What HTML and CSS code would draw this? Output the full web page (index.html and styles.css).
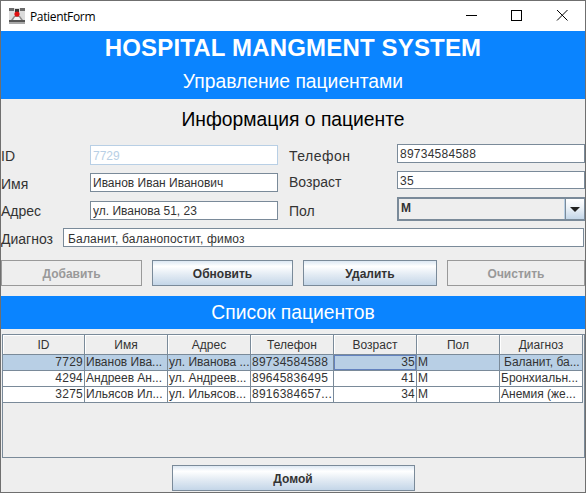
FILE: index.html
```html
<!DOCTYPE html>
<html lang="en">
<head>
    <meta charset="UTF-8">
    <title>PatientForm</title>
    <link rel="stylesheet" href="styles.css">
</head>
<body>
    <div class="window">
        <div class="titlebar">
            <svg class="app-icon" width="16" height="16" viewBox="0 0 16 16">
                <rect width="16" height="16" fill="#dcdcdc"/>
                <path d="M0 0 H5 V3 H0 Z M11 0 H16 V3 H11 Z" fill="#6a6a6a"/>
                <rect x="6" y="1" width="4" height="3" fill="#333"/>
                <path d="M2 12 L5 8 H11 L14 12 Z" fill="#8c8c8c"/>
                <path d="M4 12 L6 9 H10 L12 12 Z" fill="#f2f2f2"/>
                <circle cx="8" cy="6" r="2.6" fill="#e01010"/>
                <rect y="12" width="16" height="2" fill="#555"/>
                <rect y="14" width="16" height="2" fill="#a8a8a8"/>
            </svg>
            <span class="window-title">PatientForm</span>
            <div class="window-buttons">
                <svg width="102" height="30" viewBox="0 0 102 30">
                    <path d="M0 14.5 H11" stroke="#000" fill="none"/>
                    <rect x="45.5" y="9.5" width="10" height="10" stroke="#000" fill="none"/>
                    <path d="M91 9 L101.5 19.5 M101.5 9 L91 19.5" stroke="#000" fill="none"/>
                </svg>
            </div>
        </div>

        <div class="banner">
            <h1>HOSPITAL MANGMENT SYSTEM</h1>
            <h2>Управление пациентами</h2>
        </div>

        <h3 class="section-title">Информация о пациенте</h3>

        <div class="form-columns">
            <div class="form-left">
                <div class="form-row first">
                    <label>ID</label>
                    <input class="field disabled" type="text" value="7729" disabled>
                </div>
                <div class="form-row">
                    <label>Имя</label>
                    <input class="field" type="text" value="Иванов Иван Иванович">
                </div>
                <div class="form-row last">
                    <label>Адрес</label>
                    <input class="field" type="text" value="ул. Иванова 51, 23">
                </div>
            </div>
            <div class="form-right">
                <div class="form-row">
                    <label class="wide">Телефон</label>
                    <input class="field digits" type="text" value="89734584588">
                </div>
                <div class="form-row short">
                    <label>Возраст</label>
                    <input class="field digits" type="text" value="35">
                </div>
                <div class="form-row combo-row">
                    <label>Пол</label>
                    <div class="combo">
                        <span class="combo-value">М</span>
                        <span class="combo-arrow"><span class="arrow"></span></span>
                    </div>
                </div>
            </div>
        </div>

        <div class="diagnosis-row">
            <label>Диагноз</label>
            <input class="field" type="text" value="Баланит, баланопостит, фимоз">
        </div>

        <div class="actions">
            <button class="btn add" disabled>Добавить</button>
            <button class="btn update">Обновить</button>
            <button class="btn remove">Удалить</button>
            <button class="btn clear" disabled>Очистить</button>
        </div>

        <div class="banner list-banner">
            <h2>Список пациентов</h2>
        </div>

        <div class="table-pane">
            <table>
                <thead>
                    <tr>
                        <th>ID</th><th>Имя</th><th>Адрес</th><th>Телефон</th><th>Возраст</th><th>Пол</th><th>Диагноз</th>
                    </tr>
                </thead>
                <tbody>
                    <tr class="selected">
                        <td class="num digits">7729</td><td>Иванов Ива...</td><td>ул. Иванова ...</td><td class="digits">89734584588</td><td class="num digits focused">35</td><td>М</td><td class="indented">Баланит, ба...</td>
                    </tr>
                    <tr>
                        <td class="num digits">4294</td><td>Андреев Ан...</td><td>ул. Андреев...</td><td class="digits">89645836495</td><td class="num digits">41</td><td>М</td><td>Бронхиальн...</td>
                    </tr>
                    <tr>
                        <td class="num digits">3275</td><td>Ильясов Ил...</td><td>ул. Ильясов...</td><td class="digits">8916384657...</td><td class="num digits">34</td><td>М</td><td>Анемия (же...</td>
                    </tr>
                </tbody>
            </table>
        </div>

        <div class="home-row">
            <button class="btn home">Домой</button>
        </div>
    </div>
</body>
</html>
```

FILE: styles.css
```css
* {
    box-sizing: border-box;
}
body {
    margin: 0;
    font-family: "Liberation Sans", Arial, sans-serif;
    background: #eeeeee;
}
.window {
    width: 586px;
    height: 493px;
    border: 1px solid #6f6f6f;
    background: #eeeeee;
    display: flex;
    flex-direction: column;
    overflow: hidden;
}
.titlebar {
    height: 30px;
    flex: none;
    background: #fff;
    display: flex;
    align-items: center;
    padding-left: 8px;
}
.app-icon {
    margin-right: 5px;
}
.window-title {
    font-family: "Open Sans", "Noto Sans", sans-serif;
    font-size: 12px;
    letter-spacing: -0.35px;
    color: #000;
}
.window-buttons {
    margin-left: auto;
    height: 30px;
    padding-right: 17px;
}
.banner {
    background: #0a84ff;
    color: #fff;
    text-align: center;
    flex: none;
}
.banner h1 {
    margin: 0;
    height: 34px;
    line-height: 34px;
    font-size: 24px;
    letter-spacing: 0.17px;
    font-weight: bold;
}
.banner h2 {
    margin: 0;
    height: 34px;
    line-height: 34px;
    font-size: 19.3px;
    font-weight: normal;
}
.section-title {
    margin: 0;
    height: 42px;
    line-height: 42px;
    font-size: 19.3px;
    font-weight: normal;
    text-align: center;
    color: #000;
    flex: none;
}
.form-columns {
    display: flex;
    height: 77px;
    margin-top: 2px;
    flex: none;
}
.form-left {
    width: 277px;
    display: flex;
    flex-direction: column;
    gap: 8px;
    padding-top: 2px;
}
.form-right {
    width: 296px;
    margin-left: 11px;
    display: flex;
    flex-direction: column;
    gap: 8px;
    padding-top: 1px;
}
.form-row {
    display: flex;
    align-items: center;
    height: 19px;
    flex: none;
}
.form-row.first {
    height: 20px;
}
.form-row.last {
    margin-top: 1px;
}
.form-row.short {
    height: 18px;
}
.form-row.combo-row {
    height: 24px;
}
label {
    font-size: 14px;
    color: #333333;
}
.form-left label {
    width: 89px;
    padding-top: 2px;
}
.form-left .last label {
    padding-top: 0;
}
.form-right label {
    width: 108px;
    padding-top: 4px;
}
.form-right label.wide {
    letter-spacing: 0.5px;
}
.field {
    flex: 1;
    min-width: 0;
    height: 100%;
    border: 1px solid #7a8a99;
    background: #fff;
    padding: 1px 2px 0 2px;
    font: 12px "Liberation Sans", Arial, sans-serif;
    color: #333333;
    outline: none;
    border-radius: 0;
}
.field.digits, td.digits {
    letter-spacing: 0.25px;
}
.field.disabled {
    border-color: #b8cfe5;
    color: #b8cfe5;
}
.combo {
    flex: 1;
    height: 100%;
    display: flex;
    border: 2px solid #7a8a99;
    border-right-width: 1px;
    background: #eeeeee;
}
.combo-value {
    flex: 1;
    font-size: 12px;
    font-weight: bold;
    color: #333333;
    line-height: 19px;
    padding-left: 2px;
    border-right: 1px solid #b8cfe5;
}
.combo-arrow {
    width: 19px;
    background: linear-gradient(#ffffff, #eef3f8 40%, #c4d6e8);
    border-left: 1px solid #7a8a99;
    display: flex;
    align-items: center;
    justify-content: center;
}
.arrow {
    width: 0;
    height: 0;
    border-left: 5px solid transparent;
    border-right: 5px solid transparent;
    border-top: 5px solid #222;
}
.diagnosis-row {
    display: flex;
    align-items: center;
    height: 19px;
    margin-top: 8px;
    width: 583px;
    flex: none;
}
.diagnosis-row label {
    width: 62px;
    flex: none;
    padding-top: 2px;
}
.diagnosis-row .field {
    padding: 2px 2px 0 4px;
    letter-spacing: 0.18px;
}
.actions {
    display: flex;
    gap: 10px;
    height: 26px;
    margin-top: 13px;
    flex: none;
}
.btn {
    height: 26px;
    padding: 1px 0 0;
    border: 1px solid #7a8a99;
    border-radius: 0;
    background: linear-gradient(#dde8f3, #ffffff 22%, #e4ecf4 55%, #c4d6e8);
    font: bold 12px "Liberation Sans", Arial, sans-serif;
    color: #333333;
}
.btn:disabled {
    background: #eeeeee;
    border-color: #999999;
    color: #999999;
}
.btn.add, .btn.update {
    width: 141px;
}
.btn.remove {
    width: 134px;
}
.btn.clear {
    width: 138px;
}
.list-banner {
    margin-top: 10px;
    height: 33px;
}
.list-banner h2 {
    height: 33px;
    line-height: 33px;
}
.table-pane {
    margin: 5px 0 0 1px;
    height: 124px;
    flex: none;
    border: 1px solid #7a8a99;
    background: #eeeeee;
}
table {
    width: 580px;
    table-layout: fixed;
    border-collapse: separate;
    border-spacing: 0;
    font-size: 12px;
    color: #333333;
}
th {
    height: 20px;
    padding: 0;
    font-weight: normal;
    text-align: center;
    background: #eeeeee;
    border-right: 1px solid #7a8a99;
    border-bottom: 1px solid #7a8a99;
    box-shadow: inset 1px 1px 0 #fff;
}
th:first-child {
    width: 82px;
}
td {
    height: 16px;
    padding: 0 1px;
    background: #fff;
    border-right: 1px solid #7a8a99;
    border-bottom: 1px solid #7a8a99;
    white-space: nowrap;
    overflow: hidden;
    line-height: 15px;
}
td.num {
    text-align: right;
}
tr.selected td {
    background: #b8cfe5;
}
td.focused {
    box-shadow: inset 0 0 0 1px #6382bf;
}
td.indented {
    padding-left: 4px;
}
.home-row {
    display: flex;
    justify-content: center;
    margin-top: 7px;
    flex: none;
}
.btn.home {
    width: 243px;
}
```
